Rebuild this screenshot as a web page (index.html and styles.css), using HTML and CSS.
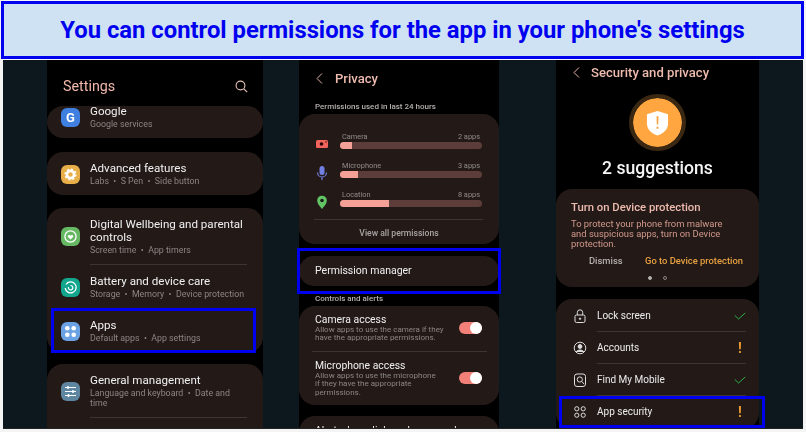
FILE: index.html
```html
<!DOCTYPE html>
<html lang="en">
<head>
  <meta charset="UTF-8" />
  <meta name="viewport" content="width=device-width, initial-scale=1.0" />
  <title>App permissions</title>
  <link rel="stylesheet" href="styles.css">
</head>
<body>
  <h1 class="banner">You can control permissions for the app in your phone's settings</h1>

  <div class="stage">

    <!-- settings -->
    <div class="phone phone-settings">
      <div class="screen">
        <div class="settings-head">
          <span class="settings-title">Settings</span>
          <svg class="search" viewBox="0 0 13 13" width="13" height="13"><circle cx="5.5" cy="5.5" r="4.4" fill="none" stroke="#e6c2b8" stroke-width="1.1"/><path d="M8.8 8.8 12.2 12.2" stroke="#e6c2b8" stroke-width="1.2"/></svg>
        </div>

        <div class="card card-google">
          <div class="item item-google">
            <div class="app-icon icon-blue"><span class="g-letter">G</span></div>
            <div>
              <div class="item-title">Google</div>
              <div class="item-sub">Google services</div>
            </div>
          </div>
        </div>

        <div class="card card-gap">
          <div class="item">
            <div class="app-icon icon-yellow">
              <svg viewBox="0 0 19 19" width="19" height="19"><circle cx="9.5" cy="9.5" r="3.6" fill="none" stroke="#fff" stroke-width="2.6"/><circle cx="9.5" cy="9.5" r="5.4" fill="none" stroke="#fff" stroke-width="1.4" stroke-dasharray="2.1 2.1"/></svg>
            </div>
            <div>
              <div class="item-title">Advanced features</div>
              <div class="item-sub">Labs &nbsp;•&nbsp; S Pen &nbsp;•&nbsp; Side button</div>
            </div>
          </div>
        </div>

        <div class="card card-gap card-big">
          <div class="item">
            <div class="app-icon icon-green">
              <svg viewBox="0 0 19 19" width="19" height="19"><circle cx="9.5" cy="9.5" r="5.6" fill="none" stroke="#fff" stroke-width="1.3"/><path d="M9.5 12.4 7 10c-1.2-1.3.8-3 2.5-1.4C11.200 7 13.200 8.700 12 10z" fill="#fff"/></svg>
            </div>
            <div>
              <div class="item-title">Digital Wellbeing and parental<br>controls</div>
              <div class="item-sub">Screen time &nbsp;•&nbsp; App timers</div>
            </div>
          </div>
          <div class="item-line"></div>
          <div class="item">
            <div class="app-icon icon-teal">
              <svg viewBox="0 0 19 19" width="19" height="19"><path d="M5 6.500a5.500 5.500 0 1 1-.8 3.500" fill="none" stroke="#fff" stroke-width="1.3"/><path d="M9.500 7.500a2.200 2.200 0 1 1-2 1.500" fill="none" stroke="#fff" stroke-width="1.200"/></svg>
            </div>
            <div>
              <div class="item-title">Battery and device care</div>
              <div class="item-sub">Storage &nbsp;•&nbsp; Memory &nbsp;•&nbsp; Device protection</div>
            </div>
          </div>
          <div class="item item-apps">
            <div class="app-icon icon-sky">
              <svg viewBox="0 0 19 19" width="19" height="19" fill="#fff"><circle cx="6.300" cy="6.300" r="2.300"/><circle cx="12.700" cy="6.300" r="2.300"/><circle cx="6.300" cy="12.700" r="2.300"/><circle cx="12.700" cy="12.700" r="2.300"/></svg>
            </div>
            <div>
              <div class="item-title">Apps</div>
              <div class="item-sub">Default apps &nbsp;•&nbsp; App settings</div>
            </div>
          </div>
        </div>

        <div class="card card-general">
          <div class="item">
            <div class="app-icon icon-slate">
              <svg viewBox="0 0 19 19" width="19" height="19" stroke="#fff" stroke-width="1.100"><path d="M4 5.500h11M4 9.500h11M4 13.500h11"/><path d="M7 4v3M12 8v3M7.500 12v3" stroke-width="1.500"/></svg>
            </div>
            <div>
              <div class="item-title">General management</div>
              <div class="item-sub">Language and keyboard &nbsp;•&nbsp; Date and<br>time</div>
            </div>
          </div>
          <div class="item-line"></div>
        </div>
      </div>
      <div class="mark mark-apps"></div>
    </div>

    <!-- privacy -->
    <div class="phone phone-privacy">
      <div class="screen">
        <div class="page-head head-privacy">
          <svg viewBox="0 0 7 11" width="7" height="11"><path d="M6 .5 1 5.500l5 5" fill="none" stroke="#e6b5a8" stroke-width="1"/></svg>
          <span class="page-title">Privacy</span>
        </div>

        <div class="section-label label-used">Permissions used in last 24 hours</div>
        <div class="card card-usage">
          <div class="usage">
            <svg class="usage-icon" viewBox="0 0 14 14" width="14" height="14"><rect x="1" y="3" width="12" height="8" rx="1.500" fill="#f0645c"/><circle cx="6.500" cy="7" r="1.800" fill="#200"/><circle cx="11" cy="5" r=".7" fill="#200"/></svg>
            <div class="usage-main">
              <div class="usage-text"><span>Camera</span><span>2 apps</span></div>
              <div class="bar"><div class="bar-fill" style="width: 12px"></div></div>
            </div>
          </div>
          <div class="usage">
            <svg class="usage-icon" viewBox="0 0 14 14" width="14" height="14"><rect x="4.500" y="0" width="5" height="9" rx="2.500" fill="#717fe2"/><path d="M2.500 6.500a4.500 4.500 0 0 0 9 0M7 11v3" fill="none" stroke="#717fe2" stroke-width="1.200"/></svg>
            <div class="usage-main">
              <div class="usage-text"><span>Microphone</span><span>3 apps</span></div>
              <div class="bar"><div class="bar-fill" style="width: 18px"></div></div>
            </div>
          </div>
          <div class="usage">
            <svg class="usage-icon" viewBox="0 0 14 14" width="14" height="14"><path d="M7 14C4 10.500 2.200 8.500 2.200 5.500a4.800 4.800 0 0 1 9.600 0C11.800 8.500 10 10.500 7 14z" fill="#62c464"/><circle cx="7" cy="5.500" r="1.800" fill="#1a1a1a"/></svg>
            <div class="usage-main">
              <div class="usage-text"><span>Location</span><span>8 apps</span></div>
              <div class="bar"><div class="bar-fill" style="width: 49px"></div></div>
            </div>
          </div>
          <div class="usage-line"></div>
          <div class="view-all">View all permissions</div>
        </div>

        <div class="card card-manager">Permission manager</div>

        <div class="section-label label-controls">Controls and alerts</div>
        <div class="card card-access">
          <div class="access">
            <div>
              <div class="access-title">Camera access</div>
              <div class="access-desc">Allow apps to use the camera if they<br>have the appropriate permissions.</div>
            </div>
            <div class="toggle"></div>
          </div>
          <div class="access-line"></div>
          <div class="access">
            <div>
              <div class="access-title">Microphone access</div>
              <div class="access-desc">Allow apps to use the microphone<br>if they have the appropriate<br>permissions.</div>
            </div>
            <div class="toggle"></div>
          </div>
        </div>

        <div class="card card-next">
          <div class="access-title">Alert when clipboard accessed</div>
        </div>
      </div>
      <div class="mark mark-manager"></div>
    </div>

    <!-- security -->
    <div class="phone phone-security">
      <div class="screen">
        <div class="page-head head-security">
          <svg viewBox="0 0 7 11" width="7" height="11"><path d="M6 .5 1 5.500l5 5" fill="none" stroke="#e6b5a8" stroke-width="1"/></svg>
          <span class="page-title">Security and privacy</span>
        </div>

        <div class="shield-ring">
          <svg viewBox="0 0 24 26" width="23" height="26"><path d="M12 .5 23 4v9.500C23 20 18 24 12 26 6 24 1 20 1 13.500V4z" fill="#fff"/><path d="M11 6h2l-.3 8.500h-1.400zM11 17h2v2h-2z" fill="#f5a040"/></svg>
        </div>
        <div class="suggestions">2 suggestions</div>

        <div class="card card-protect">
          <div class="protect-title">Turn on Device protection</div>
          <div class="protect-text">To protect your phone from malware<br>and suspicious apps, turn on Device<br>protection.</div>
          <div class="protect-actions">
            <span class="dismiss">Dismiss</span>
            <span class="go-to">Go to Device protection</span>
          </div>
          <div class="dots"><span class="dot dot-on"></span><span class="dot"></span></div>
        </div>

        <div class="card card-rows">
          <div class="row">
            <svg class="row-icon" viewBox="0 0 14 14" width="14" height="14" fill="none" stroke="#ddd" stroke-width="1"><rect x="2" y="6" width="10" height="7.500" rx="1.500"/><path d="M4.300 6V3.500a2.700 2.700 0 0 1 5.400 0V6"/><circle cx="7" cy="9.700" r=".7" fill="#ddd"/></svg>
            <span class="row-name">Lock screen</span>
            <svg class="check" viewBox="0 0 12 8" width="12" height="8"><path d="M.8 3.500 4.500 7 11.200 1" fill="none" stroke="#2bb04f" stroke-width="1"/></svg>
          </div>
          <div class="row-line"></div>
          <div class="row">
            <svg class="row-icon" viewBox="0 0 14 14" width="14" height="14" fill="none" stroke="#ddd" stroke-width="1"><circle cx="7" cy="7" r="5.800"/><circle cx="7" cy="5.500" r="1.900" fill="#ddd"/><path d="M3.200 11c1-2.600 6.600-2.600 7.600 0" fill="#ddd"/></svg>
            <span class="row-name">Accounts</span>
            <span class="warn">!</span>
          </div>
          <div class="row-line"></div>
          <div class="row">
            <svg class="row-icon" viewBox="0 0 14 14" width="14" height="14" fill="none" stroke="#ddd" stroke-width="1"><rect x="1.500" y="1" width="11" height="12.500" rx="2.500"/><circle cx="6.800" cy="6.500" r="2.600"/><path d="M8.800 8.500 11 11"/></svg>
            <span class="row-name">Find My Mobile</span>
            <svg class="check" viewBox="0 0 12 8" width="12" height="8"><path d="M.8 3.500 4.500 7 11.200 1" fill="none" stroke="#2bb04f" stroke-width="1"/></svg>
          </div>
          <div class="row-line"></div>
          <div class="row">
            <svg class="row-icon" viewBox="0 0 14 14" width="14" height="14" fill="none" stroke="#ddd" stroke-width="1"><circle cx="3.800" cy="3.800" r="2.100"/><circle cx="10.200" cy="3.800" r="2.100"/><circle cx="3.800" cy="10.200" r="2.100"/><circle cx="10.200" cy="10.200" r="2.100"/></svg>
            <span class="row-name">App security</span>
            <span class="warn">!</span>
          </div>
        </div>
      </div>
      <div class="mark mark-security"></div>
    </div>

  </div>
</body>
</html>
```

FILE: styles.css
```css
* {
  box-sizing: border-box;
}
html, body {
  height: 100%;
}
body {
  margin: 0;
  padding: 1px 2px 0 1px;
  background: #f4f4f4;
  font-family: "Roboto", "Liberation Sans", sans-serif;
  overflow: hidden;
}

.banner {
  margin: 0;
  height: 58px;
  border: 3px solid #0000f0;
  outline: 1px solid #0000f0;
  outline-offset: -1px;
  background: #cfe2f3;
  color: #0000f0;
  font-size: 23.8px;
  font-weight: 700;
  line-height: 52px;
  text-align: center;
}

.stage {
  display: flex;
  margin: 1px 0 0 2px;
  padding-left: 44px;
  width: 800px;
  height: 369px;
  background: #0c171e;
  border-bottom: 1px solid #222;
  color: #f2f2f2;
}

.phone {
  position: relative;
  flex: none;
  height: 368px;
  background: #000;
}
.phone-settings {
  width: 216px;
  margin-right: 36px;
}
.phone-privacy {
  width: 200px;
  margin-right: 57px;
}
.phone-security {
  width: 203px;
}
.screen {
  height: 100%;
  overflow: hidden;
  filter: blur(0.3px);
}

.mark {
  position: absolute;
  border: 3px solid #0000f0;
}
.mark-apps {
  left: 4px;
  top: 248px;
  width: 205px;
  height: 45px;
}
.mark-manager {
  left: -2px;
  top: 188px;
  width: 204px;
  height: 46px;
}
.mark-security {
  left: 3px;
  top: 336px;
  width: 206px;
  height: 32px;
}

.card {
  background: #231a18;
  border-radius: 16px;
}

/* settings */
.settings-head {
  display: flex;
  align-items: center;
  justify-content: space-between;
  height: 46px;
  padding: 6px 15px 0 16px;
}
.settings-title {
  color: #f2b8ab;
  font-size: 14.3px;
}
.card-google {
  height: 32px;
}
.item {
  display: flex;
  align-items: center;
  gap: 10px;
  padding: 10px 10px 9px 14px;
}
.item-google {
  padding: 0 14px;
  align-items: flex-start;
}
.item-google > div:last-child {
  margin-top: -1px;
}
.item-google .app-icon {
  margin-top: 2px;
}
.item-apps {
  padding-top: 11px;
}
.item-title {
  font-size: 11.6px;
  line-height: 13px;
  color: #f0f0f0;
}
.item-sub {
  margin-top: 1px;
  font-size: 8.8px;
  line-height: 10px;
  color: #8c8583;
}
.item-line {
  height: 1px;
  margin: 0 16px 0 43px;
  background: #3d3533;
}
.card-gap {
  margin-top: 14px;
}
.card-big {
  margin-top: 13px;
  padding-bottom: 1px;
}
.card-general {
  margin-top: 11px;
  height: 90px;
}
.app-icon {
  display: flex;
  flex: none;
  align-items: center;
  justify-content: center;
  width: 19px;
  height: 19px;
  border-radius: 6px;
}
.icon-blue { background: #3e7fe0; }
.icon-yellow { background: #e8ae48; }
.icon-green { background: #66b863; }
.icon-teal { background: #12a68f; }
.icon-sky { background: #6ba2e4; }
.icon-slate { background: #5f86a0; }
.g-letter {
  color: #fff;
  font-size: 13px;
  font-weight: 700;
}
.search {
  display: block;
}

/* privacy */
.page-head {
  display: flex;
  align-items: center;
}
.head-privacy {
  height: 36px;
  padding: 0 0 0 17px;
  gap: 12px;
}
.page-title {
  color: #eebbae;
  font-size: 13.1px;
  font-weight: 500;
}
.section-label {
  padding-left: 16px;
  color: #b5b0ae;
  font-size: 8px;
  font-weight: 500;
  line-height: 10px;
}
.label-used {
  margin: 6px 0 2px;
}
.label-controls {
  margin: 8px 0 2px;
}
.card-usage {
  height: 130px;
  padding-top: 18px;
}
.usage {
  display: flex;
  gap: 11px;
  padding: 0 17px 0 16px;
  margin-bottom: 10px;
}
.usage-icon {
  flex: none;
  margin-top: 5px;
}
.usage-main {
  flex: 1;
}
.usage-text {
  display: flex;
  justify-content: space-between;
  padding: 0 2px 0 2px;
  color: #918b89;
  font-size: 7.4px;
  line-height: 10px;
}
.bar {
  height: 7px;
  border-radius: 4px;
  background: #5c3d39;
  overflow: hidden;
}
.bar-fill {
  height: 100%;
  background: #f5a097;
}
.usage-line {
  height: 1px;
  margin: 5px 16px 0 15px;
  background: #3d3533;
}
.view-all {
  margin-top: 7px;
  color: #aaa5a3;
  font-size: 8.6px;
  font-weight: 500;
  line-height: 12px;
  text-align: center;
}
.card-manager {
  height: 30px;
  margin-top: 12px;
  padding-left: 16px;
  color: #f0f0f0;
  font-size: 10.5px;
  line-height: 30px;
}
.card-access {
  height: 99px;
  padding-top: 7px;
}
.access {
  display: flex;
  align-items: center;
  justify-content: space-between;
  padding: 0 17px 0 16px;
}
.access-title {
  color: #f0f0f0;
  font-size: 10.4px;
  line-height: 13px;
}
.access-desc {
  color: #8c8583;
  font-size: 8px;
  line-height: 8.4px;
}
.access-line {
  height: 1px;
  margin: 8px 12px 7px 13px;
  background: #3d3533;
}
.toggle {
  position: relative;
  flex: none;
  width: 23px;
  height: 12px;
  border-radius: 6px;
  background: #f08078;
}
.toggle::after {
  content: "";
  position: absolute;
  right: 0;
  top: 0;
  width: 12px;
  height: 12px;
  border-radius: 50%;
  background: #fff;
}
.card-next {
  margin-top: 11px;
  height: 40px;
  padding: 8px 0 0 16px;
}

/* security */
.head-security {
  height: 24px;
  padding-left: 17px;
  gap: 11px;
}
.shield-ring {
  display: flex;
  align-items: center;
  justify-content: center;
  width: 57px;
  height: 57px;
  margin: 10px auto 0;
  border: 4px solid #3a2812;
  border-radius: 50%;
  background: #ffa640;
  background-clip: padding-box;
}
.suggestions {
  margin-top: 6px;
  color: #f5f5f5;
  font-size: 17.6px;
  font-weight: 500;
  line-height: 22px;
  text-align: center;
}
.card-protect {
  height: 98px;
  margin-top: 10px;
  padding: 13px 15px 0;
}
.protect-title {
  color: #eebbae;
  font-size: 11.3px;
  font-weight: 500;
  line-height: 12px;
}
.protect-text {
  margin-top: 5px;
  color: #d2988b;
  font-size: 9.4px;
  line-height: 10px;
}
.protect-actions {
  display: flex;
  margin-top: 6px;
  font-size: 9.4px;
  font-weight: 500;
  line-height: 11px;
}
.dismiss {
  margin-left: 18px;
  width: 56px;
  color: #b5b0ae;
}
.go-to {
  color: #e8a040;
}
.dots {
  display: flex;
  justify-content: center;
  gap: 11px;
  margin-top: 10px;
}
.dot {
  width: 4px;
  height: 4px;
  border: 1px solid #8c8583;
  border-radius: 50%;
}
.dot-on {
  background: #b5b0ae;
  border-color: #b5b0ae;
}
.card-rows {
  height: 130px;
  margin-top: 12px;
  padding-top: 1px;
}
.row {
  display: flex;
  align-items: center;
  height: 31px;
  padding: 0 13px 0 17px;
}
.row-icon {
  flex: none;
}
.row-name {
  flex: 1;
  margin-left: 10px;
  color: #ececec;
  font-size: 10px;
}
.row-line {
  height: 1px;
  margin: 0 13px 0 41px;
  background: #3d3533;
}
.check {
  flex: none;
}
.warn {
  width: 12px;
  color: #e89a30;
  font-size: 14px;
  font-weight: 700;
  text-align: center;
}
```
